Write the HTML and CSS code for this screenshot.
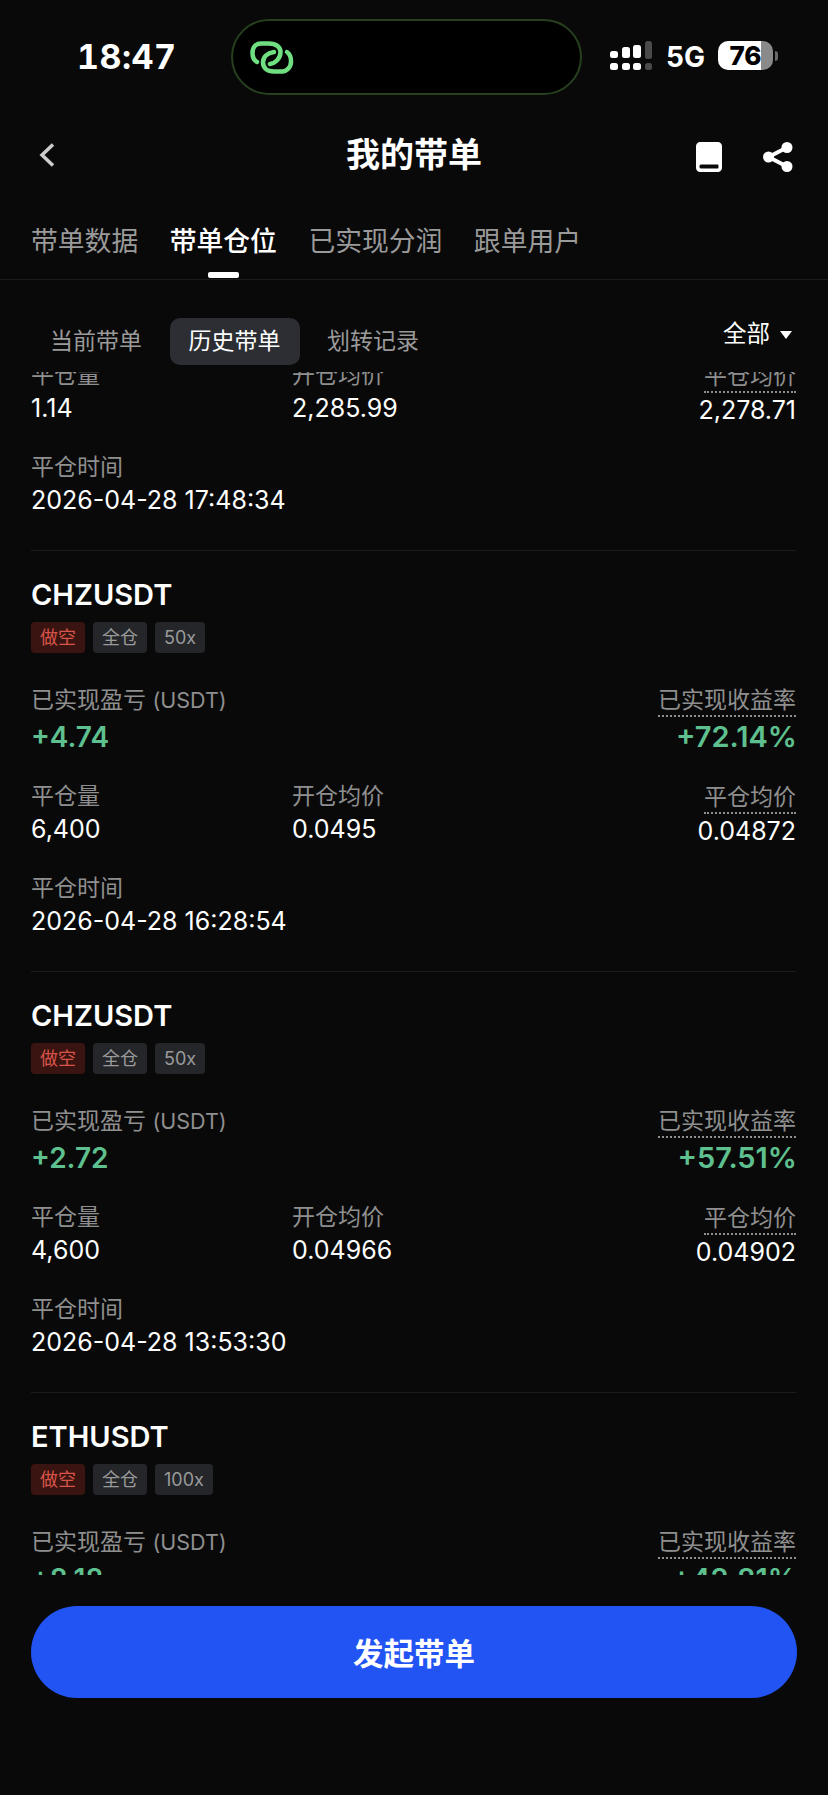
FILE: index.html
```html
<!DOCTYPE html>
<html lang="zh-CN">
<head>
    <meta charset="UTF-8">
    <meta name="viewport" content="width=device-width, initial-scale=1.0">
    <title>我的带单</title>
    <link rel="stylesheet" href="styles.css">
</head>
<body>

<div class="page">
    <div class="status-bar">
        <div class="clock">18:47</div>
        <div class="island">
            <svg class="link-icon" viewBox="0 0 44 34" width="44" height="34">
                <path d="M7 21C3.500 19 2.500 15 2.500 12C2.500 6 6 2.500 11 2.500H19C26 2.500 30.500 6 30.500 11C30.500 17 26 22 20 23" />
                <path d="M37 11C40 13 41 17 41 20.500C41 26 37 30.500 32 30.500H24C17 30.500 13 27 13 21.500C13 16 17 12 24 11" />
            </svg>
        </div>
        <div class="status-right">
            <svg class="signal" viewBox="0 0 43 30" width="43" height="30">
                <rect x="0" y="10" width="8" height="7" rx="2.500" />
                <rect x="0" y="22" width="8" height="7" rx="2.500" />
                <rect x="12" y="6" width="8" height="11" rx="2.500" />
                <rect x="12" y="22" width="8" height="7" rx="2.500" />
                <rect x="23" y="4" width="8" height="13" rx="2.500" />
                <rect x="23" y="22" width="8" height="7" rx="2.500" />
                <rect class="dim" x="35" y="0" width="7" height="18" rx="2.500" />
                <rect class="dim" x="35" y="22" width="7" height="7" rx="2.500" />
            </svg>
            <span class="network">5G</span>
            <div class="battery">
                <span class="battery-num">76</span>
            </div>
            <div class="battery-nub"></div>
        </div>
    </div>

    <div class="nav">
        <svg class="back" viewBox="0 0 16 24" width="16" height="24">
            <path d="M14 1.500L3 12L14 22.500" />
        </svg>
        <h1>我的带单</h1>
        <div class="nav-icons">
            <svg viewBox="0 0 26 30" width="26" height="30">
                <path fill-rule="evenodd" d="M4 0H22C24 0 26 2 26 4V26C26 28 24 30 22 30H4C2 30 0 28 0 26V4C0 2 2 0 4 0ZM5 22.500C3.800 22.500 3.500 23.200 3.500 24.500C3.500 25.800 3.800 26.500 5 26.500H21.500C22.300 26.500 22.500 26 22.500 24.500C22.500 23 22.300 22.500 21.500 22.500Z" />
            </svg>
            <svg class="share" viewBox="0 0 30 30" width="30" height="30">
                <circle cx="5.500" cy="15" r="5.500" />
                <circle cx="24" cy="5.500" r="5.500" />
                <circle cx="24" cy="24.500" r="5.500" />
                <path d="M5.500 15L24 5.500M5.500 15L24 24.500" />
            </svg>
        </div>
    </div>

    <div class="tabs">
        <div class="tab">带单数据</div>
        <div class="tab active">带单仓位</div>
        <div class="tab">已实现分润</div>
        <div class="tab">跟单用户</div>
    </div>

    <div class="subtabs">
        <div class="subtab">当前带单</div>
        <div class="subtab active">历史带单</div>
        <div class="subtab">划转记录</div>
        <div class="filter">全部<span class="caret"></span></div>
    </div>

    <div class="list">
        <div class="card card-tail">
            <div class="stats">
                <div class="cell">
                    <div class="label">平仓量</div>
                    <div class="value">1.14</div>
                </div>
                <div class="cell">
                    <div class="label">开仓均价</div>
                    <div class="value">2,285.99</div>
                </div>
                <div class="cell right">
                    <div class="label"><span class="dotted">平仓均价</span></div>
                    <div class="value">2,278.71</div>
                </div>
            </div>
            <div class="time">
                <div class="label">平仓时间</div>
                <div class="value">2026-04-28 17:48:34</div>
            </div>
        </div>

        <div class="card">
            <div class="symbol">CHZUSDT</div>
            <div class="tags">
                <span class="tag short">做空</span>
                <span class="tag">全仓</span>
                <span class="tag">50x</span>
            </div>
            <div class="pnl">
                <div class="cell">
                    <div class="label">已实现盈亏 <span class="unit">(USDT)</span></div>
                    <div class="pnl-value">+4.74</div>
                </div>
                <div class="cell right">
                    <div class="label"><span class="dotted">已实现收益率</span></div>
                    <div class="pnl-value">+72.14%</div>
                </div>
            </div>
            <div class="stats">
                <div class="cell">
                    <div class="label">平仓量</div>
                    <div class="value">6,400</div>
                </div>
                <div class="cell">
                    <div class="label">开仓均价</div>
                    <div class="value">0.0495</div>
                </div>
                <div class="cell right">
                    <div class="label"><span class="dotted">平仓均价</span></div>
                    <div class="value">0.04872</div>
                </div>
            </div>
            <div class="time">
                <div class="label">平仓时间</div>
                <div class="value">2026-04-28 16:28:54</div>
            </div>
        </div>

        <div class="card">
            <div class="symbol">CHZUSDT</div>
            <div class="tags">
                <span class="tag short">做空</span>
                <span class="tag">全仓</span>
                <span class="tag">50x</span>
            </div>
            <div class="pnl">
                <div class="cell">
                    <div class="label">已实现盈亏 <span class="unit">(USDT)</span></div>
                    <div class="pnl-value">+2.72</div>
                </div>
                <div class="cell right">
                    <div class="label"><span class="dotted">已实现收益率</span></div>
                    <div class="pnl-value">+57.51%</div>
                </div>
            </div>
            <div class="stats">
                <div class="cell">
                    <div class="label">平仓量</div>
                    <div class="value">4,600</div>
                </div>
                <div class="cell">
                    <div class="label">开仓均价</div>
                    <div class="value">0.04966</div>
                </div>
                <div class="cell right">
                    <div class="label"><span class="dotted">平仓均价</span></div>
                    <div class="value">0.04902</div>
                </div>
            </div>
            <div class="time">
                <div class="label">平仓时间</div>
                <div class="value">2026-04-28 13:53:30</div>
            </div>
        </div>

        <div class="card">
            <div class="symbol">ETHUSDT</div>
            <div class="tags">
                <span class="tag short">做空</span>
                <span class="tag">全仓</span>
                <span class="tag">100x</span>
            </div>
            <div class="pnl">
                <div class="cell">
                    <div class="label">已实现盈亏 <span class="unit">(USDT)</span></div>
                    <div class="pnl-value">+8.18</div>
                </div>
                <div class="cell right">
                    <div class="label"><span class="dotted">已实现收益率</span></div>
                    <div class="pnl-value">+42.81%</div>
                </div>
            </div>
        </div>
    </div>

    <div class="footer">
        <button type="button" class="primary">发起带单</button>
    </div>
</div>

</body>
</html>
```

FILE: styles.css
```css
body {
    margin: 0;
    background-color: #090909;
    color: #fff;
    font-family: Inter, "Noto Sans CJK SC", sans-serif;
}
.page {
    width: 828px;
    height: 1795px;
    overflow: hidden;
    display: flex;
    flex-direction: column;
}

/* status bar */
.status-bar {
    height: 114px;
    box-sizing: border-box;
    padding-top: 19px;
    display: flex;
    align-items: flex-start;
}
.clock {
    width: 231px;
    box-sizing: border-box;
    padding: 18px 0 0 77px;
    font-size: 34px;
    line-height: 40px;
    font-weight: 700;
    letter-spacing: 0.5px;
    font-variant-numeric: tabular-nums;
}
.island {
    width: 351px;
    height: 76px;
    box-sizing: border-box;
    padding: 20px 0 0 17px;
    background-color: #000;
    border: 2px solid #26401f;
    border-radius: 38px;
}
.link-icon {
    display: block;
    fill: none;
    stroke: #6fdf82;
    stroke-width: 4.500;
    stroke-linecap: round;
}
.status-right {
    margin-left: 28px;
    padding-top: 22px;
    display: flex;
    align-items: flex-start;
}
.signal {
    fill: #fff;
}
.signal .dim {
    fill: #4a4a4a;
}
.network {
    margin-left: 13px;
    font-size: 28px;
    line-height: 32px;
    font-weight: 700;
}
.battery {
    width: 55px;
    height: 29px;
    margin-left: 13px;
    border-radius: 10px;
    background: linear-gradient(to right, #fff 43px, #8a8a8a 43px);
    color: #000;
    text-align: center;
}
.battery-num {
    font-size: 26px;
    line-height: 29px;
    font-weight: 800;
}
.battery-nub {
    width: 3px;
    height: 10px;
    margin: 10px 0 0 2px;
    border-radius: 0 3px 3px 0;
    background-color: #6a6a6a;
}

/* nav */
.nav {
    height: 82px;
    position: relative;
    display: flex;
    align-items: center;
    justify-content: center;
}
.nav h1 {
    margin: 0;
    font-size: 34px;
    line-height: 48px;
    font-weight: 700;
}
.back {
    position: absolute;
    left: 39px;
    top: 29px;
    fill: none;
    stroke: #ccc;
    stroke-width: 3.500;
}
.nav-icons {
    position: absolute;
    left: 696px;
    top: 28px;
    display: flex;
    gap: 41px;
    fill: #fff;
}
.nav-icons .share path {
    fill: none;
    stroke: #fff;
    stroke-width: 4;
}

/* tabs */
.tabs {
    height: 84px;
    box-sizing: border-box;
    padding: 0 31px;
    display: flex;
    gap: 31.500px;
    border-bottom: 1px solid #1c1c1c;
}
.tab {
    height: 83px;
    box-sizing: border-box;
    padding-top: 26px;
    position: relative;
    font-size: 26.800px;
    line-height: 38px;
    color: #9a9a9a;
}
.tab.active {
    color: #fff;
    font-weight: 500;
}
.tab.active::after {
    content: "";
    position: absolute;
    left: 38px;
    bottom: 1px;
    width: 31px;
    height: 6px;
    border-radius: 2px;
    background-color: #fff;
}

/* sub tabs */
.subtabs {
    height: 92px;
    box-sizing: border-box;
    padding: 38px 36px 0 31px;
    display: flex;
    gap: 8.500px;
}
.subtab {
    height: 47px;
    padding: 0 19px;
    border-radius: 10px;
    font-size: 23px;
    line-height: 47px;
    color: #9a9a9a;
}
.subtab.active {
    background-color: #2c2e33;
    color: #fff;
}
.filter {
    margin: -1px 0 0 auto;
    display: flex;
    align-items: flex-start;
    gap: 10px;
    font-size: 23.500px;
    line-height: 34px;
}
.caret {
    width: 0;
    height: 0;
    margin-top: 14px;
    border-left: 6px solid transparent;
    border-right: 6px solid transparent;
    border-top: 8px solid #fff;
}

/* list */
.list {
    height: 1203px;
    overflow: hidden;
}
.card {
    margin: 0 32px 0 31px;
    padding: 27px 0 35px;
    border-bottom: 1px solid #1c1c1c;
}
.card-tail {
    margin-top: -12px;
    padding-top: 0;
}
.symbol {
    font-size: 29px;
    line-height: 34px;
    font-weight: 600;
}
.tags {
    margin-top: 10px;
    display: flex;
    gap: 8px;
}
.tag {
    height: 31px;
    padding: 0 9px;
    border-radius: 4px;
    background-color: #24262a;
    color: #9a9a9a;
    font-size: 18px;
    line-height: 31px;
}
.tag.short {
    background-color: #3a1410;
    color: #d8544a;
}
.pnl {
    margin-top: 32px;
    display: flex;
    justify-content: space-between;
}
.stats {
    margin-top: 26px;
    display: grid;
    grid-template-columns: 261px 1fr auto;
}
.card-tail .stats {
    margin-top: 0;
}
.right {
    text-align: right;
}
.stats .right {
    padding-top: 1px;
}
.stats .right .value {
    margin-top: 4px;
}
.label {
    height: 30px;
    font-size: 23px;
    line-height: 30px;
    color: #8f8f8f;
}
.unit {
    font-size: 21.500px;
}
.dotted {
    padding-bottom: 1px;
    border-bottom: 2px dotted #8f8f8f;
}
.value {
    margin-top: 3px;
    font-size: 25px;
    line-height: 30px;
}
.pnl-value {
    margin-top: 4px;
    font-size: 28px;
    line-height: 36px;
    font-weight: 600;
    color: #5fc08f;
}
.right .pnl-value {
    margin-right: -1px;
    font-size: 29px;
}
.time {
    margin-top: 27px;
}

/* bottom button */
.footer {
    padding: 31px 31px 0;
}
.primary {
    width: 100%;
    height: 92px;
    border: none;
    border-radius: 46px;
    background-color: #2254f4;
    color: #fff;
    font-family: inherit;
    font-size: 30.500px;
    font-weight: 600;
}
```
